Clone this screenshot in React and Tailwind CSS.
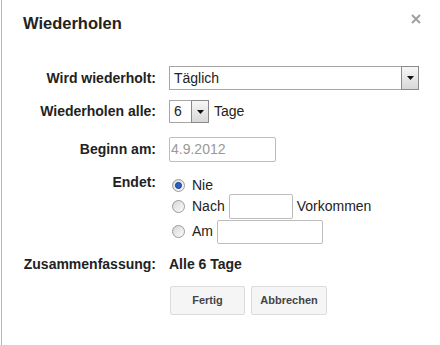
function Arrow({ className }) {
  return (
    <span
      className={
        "flex items-center justify-center border border-[#8a8a8a] bg-linear-to-b from-[#f6f6f6] to-[#d8d8d8] " +
        className
      }
    >
      <svg width="7" height="4" viewBox="0 0 7 4">
        <path d="M0 0h7L3.5 4z" fill="#111" />
      </svg>
    </span>
  );
}

function Radio({ checked }) {
  return (
    <span className="ml-[3px] mr-[7px] flex h-[13px] w-[13px] shrink-0 items-center justify-center rounded-full border border-[#9a9a9a] bg-linear-to-br from-[#d6d6d6] to-[#fcfcfc]">
      {checked && (
        <span className="h-[7px] w-[7px] rounded-full border border-[#123f8f] bg-[#2b62c8]" />
      )}
    </span>
  );
}

export default function App() {
  return (
    <div className="relative h-[345px] w-[440px] overflow-hidden bg-white font-['Liberation_Sans',Arial,sans-serif] text-[14px] text-[#222]">
      <div className="ml-px h-full border-l border-[#b5b5b5]">
        <h1 className="pl-[21px] pt-[13px] text-[16.5px] leading-5 font-bold">Wiederholen</h1>

        {/* Wird wiederholt */}
        <div className="mt-[33px] flex h-[24px] items-center">
          <div className="w-[154px] text-right font-bold">Wird wiederholt:</div>
          <div className="ml-[13px] flex h-[24px] w-[250px] items-center border border-[#a6a6a6]">
            <span className="flex-1 pl-[4px]">Täglich</span>
            <Arrow className="-my-px -mr-px h-[24px] w-[18px]" />
          </div>
        </div>

        {/* Wiederholen alle */}
        <div className="mt-[10px] flex h-[23px] items-center">
          <div className="w-[154px] text-right font-bold">Wiederholen alle:</div>
          <div className="ml-[13px] flex h-[23px] w-[40px] items-center border border-[#a6a6a6]">
            <span className="flex-1 pl-[4px]">6</span>
            <Arrow className="-my-px -mr-px h-[23px] w-[18px]" />
          </div>
          <span className="ml-[5px]">Tage</span>
        </div>

        {/* Beginn am */}
        <div className="mt-[14px] flex h-[25px] items-center">
          <div className="w-[154px] text-right font-bold">Beginn am:</div>
          <div className="ml-[13px] flex h-[25px] w-[107px] items-center rounded-[2px] border border-[#bdbdbd] pl-px text-[#999]">
            4.9.2012
          </div>
        </div>

        {/* Endet */}
        <div className="mt-[11px] flex items-start">
          <div className="w-[154px] text-right leading-[18px] font-bold">Endet:</div>
          <div className="ml-[13px] flex flex-col">
            <label className="mt-1 flex h-[17px] items-center leading-[17px]">
              <Radio checked />
              Nie
            </label>
            <label className="flex h-[25px] items-center">
              <Radio />
              Nach
              <span className="mx-[4px] h-[25px] w-[64px] rounded-[2px] border border-[#bdbdbd]" />
              Vorkommen
            </label>
            <label className="flex h-[25px] items-center">
              <Radio />
              Am
              <span className="ml-[4px] h-[24px] w-[106px] rounded-[2px] border border-[#bdbdbd]" />
            </label>
          </div>
        </div>

        {/* Zusammenfassung */}
        <div className="mt-[11px] flex leading-[18px] font-bold">
          <div className="w-[154px] text-right">Zusammenfassung:</div>
          <div className="ml-[13px]">Alle 6 Tage</div>
        </div>

        <div className="mt-[13px] ml-[168px] flex gap-[6px]">
          <button className="h-[29px] w-[75px] rounded-[2px] border border-[#dcdcdc] bg-[#f5f5f5] text-[11px] font-bold text-[#444]">
            Fertig
          </button>
          <button className="h-[29px] w-[76px] rounded-[2px] border border-[#dcdcdc] bg-[#f5f5f5] text-[11px] font-bold text-[#444]">
            Abbrechen
          </button>
        </div>
      </div>

      <svg className="absolute left-[411px] top-[14px]" width="10" height="10" viewBox="0 0 10 10">
        <path d="M1 1l8 8M9 1l-8 8" stroke="#a0a0a0" strokeWidth="2" />
      </svg>
    </div>
  );
}
